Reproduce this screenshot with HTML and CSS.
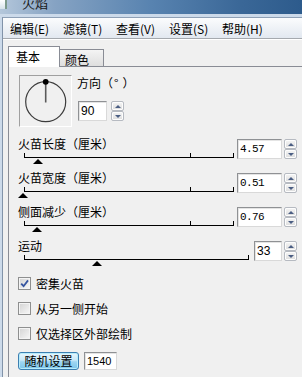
FILE: index.html
```html
<!DOCTYPE html>
<html>
<head>
    <meta name="viewport" content="width=device-width, initial-scale=1">
    <title>火焰</title>
    <link rel="stylesheet" href="styles.css">
</head>
<body>
    <div class="titlebar">
        <span class="app-icon"></span>
        <span class="title">火焰</span>
    </div>
    <div class="frame">
        <div class="inner">
            <div class="menubar">
                <span class="menu">编辑(E)</span>
                <span class="menu">滤镜(T)</span>
                <span class="menu">查看(V)</span>
                <span class="menu">设置(S)</span>
                <span class="menu">帮助(H)</span>
            </div>

            <div class="tabs">
                <div class="tab active">基本</div>
                <div class="tab">颜色</div>
            </div>

            <div class="panel">
                <div class="direction">
                    <div class="compass">
                        <svg width="51" height="50" viewBox="0 0 51 50">
                            <circle cx="25.7" cy="25.7" r="20" fill="none" stroke="#3c3c3c" stroke-width="1.2"/>
                            <line x1="25.7" y1="6" x2="25.7" y2="26.5" stroke="#5a5a5a" stroke-width="1.6"/>
                            <circle cx="25.7" cy="5.8" r="2.9" fill="#000"/>
                        </svg>
                    </div>
                    <div class="dir-ctl">
                        <div class="dir-label">方向（<span class="deg">°</span>）</div>
                        <div class="field dir-field">
                            <input class="num" type="text" value="90" style="width:29px">
                            <div class="spin">
                                <span class="spin-btn"><i class="arrow-up"></i></span>
                                <span class="spin-btn"><i class="arrow-down"></i></span>
                            </div>
                        </div>
                    </div>
                </div>

                <div class="slider first">
                    <div class="slider-main">
                        <div class="label">火苗长度（厘米）</div>
                        <div class="track">
                            <span class="tick tick-start"></span>
                            <span class="tick tick-mid"></span>
                            <span class="tick tick-end"></span>
                            <span class="thumb" style="left:9px"></span>
                        </div>
                    </div>
                    <div class="field">
                        <input class="num dec" type="text" value="4.57" style="width:45px">
                        <div class="spin">
                            <span class="spin-btn"><i class="arrow-up"></i></span>
                            <span class="spin-btn"><i class="arrow-down"></i></span>
                        </div>
                    </div>
                </div>

                <div class="slider">
                    <div class="slider-main">
                        <div class="label">火苗宽度（厘米）</div>
                        <div class="track">
                            <span class="tick tick-start"></span>
                            <span class="tick tick-mid"></span>
                            <span class="tick tick-end"></span>
                            <span class="thumb" style="left:-6px"></span>
                        </div>
                    </div>
                    <div class="field">
                        <input class="num dec" type="text" value="0.51" style="width:45px">
                        <div class="spin">
                            <span class="spin-btn"><i class="arrow-up"></i></span>
                            <span class="spin-btn"><i class="arrow-down"></i></span>
                        </div>
                    </div>
                </div>

                <div class="slider">
                    <div class="slider-main">
                        <div class="label">侧面减少（厘米）</div>
                        <div class="track">
                            <span class="tick tick-start"></span>
                            <span class="tick tick-mid"></span>
                            <span class="tick tick-end"></span>
                            <span class="thumb" style="left:8px"></span>
                        </div>
                    </div>
                    <div class="field">
                        <input class="num dec" type="text" value="0.76" style="width:45px">
                        <div class="spin">
                            <span class="spin-btn"><i class="arrow-up"></i></span>
                            <span class="spin-btn"><i class="arrow-down"></i></span>
                        </div>
                    </div>
                </div>

                <div class="slider motion">
                    <div class="slider-main">
                        <div class="label">运动</div>
                        <div class="track track-wide">
                            <span class="tick tick-start"></span>
                            <span class="tick tick-end"></span>
                            <span class="thumb" style="left:68px"></span>
                        </div>
                    </div>
                    <div class="field">
                        <input class="num" type="text" value="33" style="width:28px">
                        <div class="spin">
                            <span class="spin-btn"><i class="arrow-up"></i></span>
                            <span class="spin-btn"><i class="arrow-down"></i></span>
                        </div>
                    </div>
                </div>

                <label class="check">
                    <span class="box">
                        <svg width="11" height="11" viewBox="0 0 11 11">
                            <path d="M2.2 5.6 L4.6 8.2 L9 2.4" fill="none" stroke="#3554a0" stroke-width="1.8"/>
                        </svg>
                    </span>
                    <span>密集火苗</span>
                </label>
                <label class="check">
                    <span class="box"></span>
                    <span>从另一侧开始</span>
                </label>
                <label class="check">
                    <span class="box"></span>
                    <span>仅选择区外部绘制</span>
                </label>

                <div class="actions">
                    <button class="btn">随机设置</button>
                    <input class="num seed" type="text" value="1540">
                </div>
            </div>
        </div>
    </div>
</body>
</html>
```

FILE: styles.css
```css
* {
    box-sizing: border-box;
}

body {
    margin: 0;
    height: 377px;
    overflow: hidden;
    background-color: #f0f0f0;
    font-family: "Noto Sans CJK SC", "Noto Sans", sans-serif;
    font-size: 12px;
    color: #000;
}

/* window chrome */
.titlebar {
    height: 14px;
    display: flex;
    align-items: flex-start;
    overflow: hidden;
    background: linear-gradient(90deg, #b4c7db 0, #86a3c3 18%, #5883b0 50%, #3a6797 80%, #2d5b8c 100%);
}

.app-icon {
    width: 7px;
    height: 9px;
    background: linear-gradient(#ffffff, #d6e2ea);
    border-right: 2px solid #7c9a8c;
}

.title {
    margin-left: 15px;
    margin-top: -4px;
    font-size: 13px;
    line-height: 13px;
    color: #1a1a1a;
}

.frame {
    padding: 3px 0 0 2px;
    background-color: #ccdaea;
}

.inner {
    border-top: 1px solid #8ea0b6;
    border-left: 1px solid #8193a9;
    background-color: #f0f0f0;
}

.menubar {
    display: flex;
    align-items: center;
    height: 21px;
    padding: 1px 0 0 1px;
    background: linear-gradient(#fbfcfd, #e2e8f0);
    border-bottom: 1px solid #a5a9ae;
    box-shadow: 0 1px 0 #fff;
}

.menu {
    width: 53px;
    padding-left: 6px;
    line-height: 14px;
    white-space: nowrap;
}

/* tabs */
.tabs {
    display: flex;
    align-items: flex-end;
    height: 27px;
    padding-left: 5px;
}

.tab {
    height: 17px;
    width: 45px;
    margin-left: -1px;
    padding: 2px 0 0 5px;
    line-height: 16px;
    border: 1px solid #898c95;
    border-bottom: none;
    background: linear-gradient(#f4f4f4, #dedede);
}

.tab.active {
    position: relative;
    z-index: 1;
    height: 21px;
    width: 52px;
    margin-left: 0;
    margin-bottom: -1px;
    padding-left: 7px;
    background: #fff;
}

.panel {
    margin-left: 5px;
    height: 320px;
    padding: 8px 0 0 9px;
    border-top: 1px solid #898c95;
    border-left: 1px solid #898c95;
}

/* direction */
.direction {
    display: flex;
}

.compass {
    width: 53px;
    height: 52px;
    margin-left: 1px;
    border-top: 1px solid #a0a0a0;
    border-left: 1px solid #a0a0a0;
    border-right: 1px solid #fff;
    border-bottom: 1px solid #fff;
}

.compass svg {
    display: block;
}

.dir-ctl {
    margin-left: 5px;
}

.dir-label {
    line-height: 16px;
    height: 26px;
    white-space: nowrap;
}

.deg {
    margin-left: 1px;
    margin-right: 4px;
}

.dir-field {
    margin-left: 1px;
}

.dir-field .spin {
    margin-left: 4px;
}

/* inputs */
.field {
    display: flex;
}

.num {
    height: 20px;
    margin: 0;
    padding: 0 2px;
    background: #fff;
    border: 1px solid;
    border-color: #8f9194 #d9d9d9 #d9d9d9 #8f9194;
    box-shadow: inset 1px 1px 0 #e4e4e4;
    font-family: "Liberation Sans", Arial, sans-serif;
    font-size: 12px;
    color: #000;
    outline: none;
}

.num.dec {
    font-family: "Liberation Mono", monospace;
    font-size: 11px;
    letter-spacing: -0.6px;
}

.spin {
    display: flex;
    flex-direction: column;
    width: 13px;
    height: 20px;
    margin-left: 2px;
}

.spin-btn {
    flex: 1;
    display: flex;
    align-items: center;
    justify-content: center;
    border: 1px solid #b6bac1;
    border-radius: 2px;
    background: linear-gradient(#f6f6f6, #dcdcdc);
    box-shadow: inset 0 0 0 1px #fdfdfd;
}

.arrow-up,
.arrow-down {
    width: 0;
    height: 0;
    border-left: 3px solid transparent;
    border-right: 3px solid transparent;
}

.arrow-up {
    border-bottom: 3px solid #4b5e83;
}

.arrow-down {
    border-top: 3px solid #4b5e83;
}

/* sliders */
.slider {
    display: flex;
    width: 279px;
    height: 34px;
}

.slider.first {
    margin-top: 10px;
}

.slider.motion {
    height: 32px;
}

.slider .field {
    margin-left: auto;
    margin-top: 2px;
    align-self: flex-start;
}

.label {
    line-height: 14px;
    white-space: nowrap;
}

.track {
    position: relative;
    width: 210px;
    height: 7px;
    margin-left: 6px;
    border-bottom: 1px solid #000;
}

.track-wide {
    width: 225px;
}

.tick {
    position: absolute;
    bottom: -1px;
    width: 1px;
    height: 5px;
    background: #000;
}

.tick-start {
    left: 0;
}

.tick-mid {
    left: 166px;
}

.tick-end {
    right: 0;
}

.thumb {
    position: absolute;
    top: 8px;
    width: 0;
    height: 0;
    border-left: 5px solid transparent;
    border-right: 5px solid transparent;
    border-bottom: 5px solid #000;
}

/* checkboxes */
.check {
    display: flex;
    align-items: center;
    height: 25px;
    line-height: 14px;
}

.box {
    display: flex;
    align-items: center;
    justify-content: center;
    width: 13px;
    height: 13px;
    margin-right: 5px;
    border: 1px solid #8e8f8f;
    background: linear-gradient(135deg, #d3d3d3, #f8f8f8);
    box-shadow: inset 0 0 0 1px #f4f4f4;
}

.box svg {
    display: block;
}

/* bottom */
.actions {
    display: flex;
    margin-top: 6px;
}

.btn {
    width: 61px;
    height: 18px;
    margin: 0;
    padding: 0;
    border: 1px solid #3c7fb1;
    border-radius: 3px;
    background: linear-gradient(#e8f6fd 0, #c8e8f8 45%, #9fd6f2 55%, #7cc6ea 100%);
    box-shadow: inset 0 0 0 1px #b8ecfb;
    font-family: "Noto Sans CJK SC", sans-serif;
    font-size: 12px;
    line-height: 14px;
    color: #000;
}

.seed {
    width: 33px;
    height: 18px;
    margin-left: 5px;
    font-size: 11px;
}
```
